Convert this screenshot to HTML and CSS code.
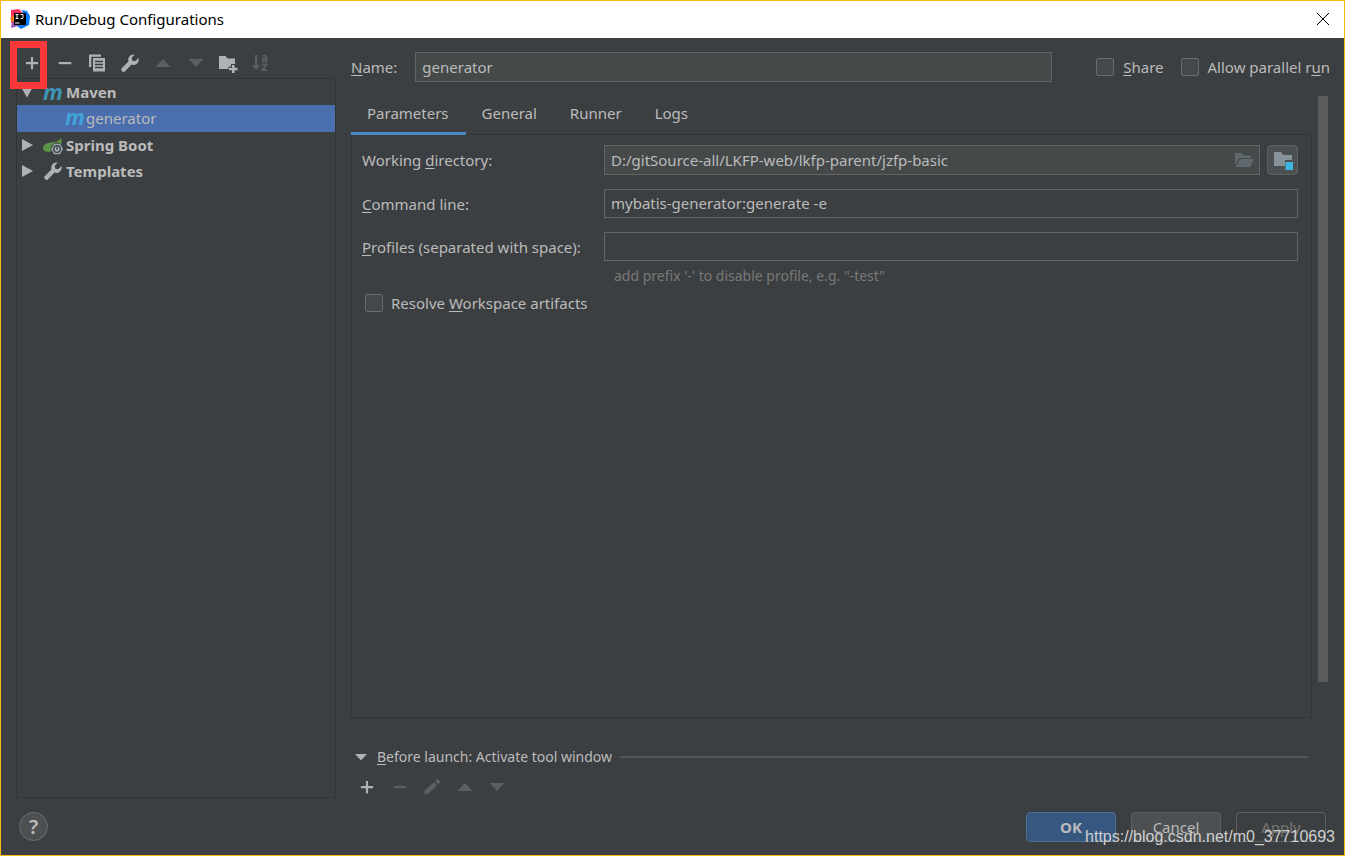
FILE: index.html
```html
<!DOCTYPE html>
<html lang="en">
<head>
<meta charset="utf-8">
<title>Run/Debug Configurations</title>
<link rel="stylesheet" href="styles.css">
</head>
<body>
<svg class="defs" aria-hidden="true">
  <symbol id="i-plus" viewBox="0 0 20 20"><path d="M8.9 4h2.2v5h5v2.2h-5v5H8.9v-5h-5V9h5z"/></symbol>
  <symbol id="i-minus" viewBox="0 0 20 20"><path d="M3.7 9h12.6v2.2H3.7z"/></symbol>
  <symbol id="i-copy" viewBox="0 0 20 20"><path d="M2 1.500h12v2.300H4.300V14H2z"/><path fill-rule="evenodd" d="M6 5h12v13.500H6zM8 7.800v1.500h8V7.800zm0 3v1.500h8v-1.500zm0 3v1.500h8v-1.500z"/></symbol>
  <symbol id="i-wrench" viewBox="0 0 20 20"><path d="M14.700 1.600a5.400 5.400 0 0 0-6.300 6.900L1.500 15.400a1.700 1.700 0 0 0 0 2.100l1 1a1.700 1.700 0 0 0 2.300 0l6.700-6.900a5.400 5.400 0 0 0 7-6.600L15.200 8.200 12.300 7.700 11.800 4.700z"/></symbol>
  <symbol id="i-up" viewBox="0 0 20 20"><path d="M10 6l7.500 8h-15z"/></symbol>
  <symbol id="i-down" viewBox="0 0 20 20"><path d="M2.500 6h15L10 14z"/></symbol>
  <symbol id="i-folder-add" viewBox="0 0 20 20"><path d="M1 3h6.500l2 2.500H17V11h-4v2.500h-2.500V16H1z"/><path d="M14 12h2.500v2.800h3v2.500h-3V20H14v-2.700h-3v-2.500h3z"/></symbol>
  <symbol id="i-pencil" viewBox="0 0 20 20"><path d="M11.700 5.200l3.300 3.300L6 17H2.500v-3.200zM12.800 4l1.800-1.800q.8-.6 1.500 0l2 2q.6.800 0 1.500L16.200 7.400z"/></symbol>
</svg>

<div class="dialog">
  <header class="titlebar">
    <svg class="app-logo" viewBox="0 0 20 20" aria-hidden="true">
      <path fill="#fe315d" d="M1 1l8-1 4 4-3 8-9 2z"/>
      <path fill="#f97a12" d="M0 9l4-3 4 7-4 3z"/>
      <path fill="#9b4fb5" d="M2 13l7-1-1 5-7 2z"/>
      <path fill="#087cfa" d="M12 1l5 1 3 5-1 9-8 4-4-3 8-6z"/>
      <path fill="#000" d="M4 4h12v12H4z"/>
      <path fill="none" stroke="#fff" d="M5.500 5.500h3M7 5.500v4M5.500 9.500h3M10.500 5.500h2.500v3q0 1-1 1h-1.500"/>
      <path fill="#fff" d="M5 13.500h4.500v1H5z"/>
    </svg>
    <h1 class="titlebar-text">Run/Debug Configurations</h1>
    <button class="close" type="button" aria-label="Close"><svg viewBox="0 0 14 14"><path d="M1 1l12 12M13 1L1 13"/></svg></button>
  </header>

  <main class="main">
    <aside class="sidebar">
      <div class="toolbar toolbar-side">
        <button class="tool tool-marked" type="button" aria-label="Add"><svg><use href="#i-plus"/></svg></button>
        <button class="tool" type="button" aria-label="Remove"><svg><use href="#i-minus"/></svg></button>
        <button class="tool" type="button" aria-label="Copy"><svg><use href="#i-copy"/></svg></button>
        <button class="tool" type="button" aria-label="Edit templates"><svg><use href="#i-wrench"/></svg></button>
        <button class="tool" type="button" aria-label="Move up" disabled><svg><use href="#i-up"/></svg></button>
        <button class="tool" type="button" aria-label="Move down" disabled><svg><use href="#i-down"/></svg></button>
        <button class="tool" type="button" aria-label="New folder"><svg><use href="#i-folder-add"/></svg></button>
        <button class="tool" type="button" aria-label="Sort" disabled><svg viewBox="0 0 20 20"><path d="M4 2h2.200v10h3.500L5.100 17 .5 12H4z"/><path fill="none" stroke="currentColor" stroke-width="1.800" d="M11.500 3.200q4-1.400 4 1.300v4.500M15.500 5.500h-2q-2 .2-2 1.500t1.500 1.400 2.500-1.400M11 11.500h4.500l-4 5.500H16"/></svg></button>
      </div>
      <div class="tree" role="tree">
        <div class="row" role="treeitem" aria-expanded="true">
          <svg class="arrow" viewBox="0 0 12 12"><path d="M0 1h12L6 11.500z"/></svg>
          <span class="maven" aria-hidden="true">m</span>
          <span class="group">Maven</span>
        </div>
        <div class="row row-child" role="treeitem" aria-selected="true">
          <span class="maven" aria-hidden="true">m</span>
          <span>generator</span>
        </div>
        <div class="row" role="treeitem" aria-expanded="false">
          <svg class="arrow" viewBox="0 0 12 12"><path d="M1 0l11 6L1 12z"/></svg>
          <svg class="node-icon" viewBox="0 0 20 20">
            <path fill="#5b9445" d="M18 3q1.500 6-.5 8L8 16.500Q0 18 0 13q.5-5 8-5.500 7-.5 10-4.500z"/>
            <circle cx="14" cy="14" r="6.500" fill="#3c3f41"/>
            <path fill="#9aa7b0" d="M11 8.800h6l3 5.200-3 5.200h-6L8 14z"/>
            <circle cx="14" cy="14" r="3.300" fill="none" stroke="#3c3f41" stroke-width="1.300"/>
            <path fill="none" stroke="#3c3f41" stroke-width="1.300" d="M14 11.500v3"/>
          </svg>
          <span class="group">Spring Boot</span>
        </div>
        <div class="row" role="treeitem" aria-expanded="false">
          <svg class="arrow" viewBox="0 0 12 12"><path d="M1 0l11 6L1 12z"/></svg>
          <svg class="node-icon"><use href="#i-wrench"/></svg>
          <span class="group">Templates</span>
        </div>
      </div>
    </aside>

    <section class="config">
      <div class="name-row">
        <label for="name"><u>N</u>ame:</label>
        <input class="field field-filled name-field" id="name" type="text" value="generator">
        <label class="check"><input type="checkbox"><span><u>S</u>hare</span></label>
        <label class="check"><input type="checkbox"><span>Allow parallel r<u>u</u>n</span></label>
      </div>

      <div class="scroll-area">
        <div class="scroll-content">
          <div class="tabs" role="tablist">
            <button class="tab" type="button" role="tab" aria-selected="true">Parameters</button>
            <button class="tab" type="button" role="tab">General</button>
            <button class="tab" type="button" role="tab">Runner</button>
            <button class="tab" type="button" role="tab">Logs</button>
          </div>
          <div class="panel" role="tabpanel">
            <div class="form">
              <label for="dir">Working <u>d</u>irectory:</label>
              <div class="dir-row">
                <div class="field field-filled dir-box">
                  <input class="dir-input" id="dir" type="text" value="D:/gitSource-all/LKFP-web/lkfp-parent/jzfp-basic">
                  <button class="browse" type="button" aria-label="Browse"><svg viewBox="0 0 20 16"><path d="M1 1h6.500l2 2.500H17V6H5.500L1 13z"/><path d="M6 7h14l-4 8H1.500z"/></svg></button>
                </div>
                <button class="module" type="button" aria-label="Select module"><svg viewBox="0 0 20 20"><path fill="#87939a" d="M1 2h7l2.500 3H19v5h-7v6H1z"/><path fill="#40b6e0" d="M12.500 12H20v8h-7.500z"/></svg></button>
              </div>
              <label for="cmd"><u>C</u>ommand line:</label>
              <input class="field" id="cmd" type="text" value="mybatis-generator:generate -e">
              <label for="profiles"><u>P</u>rofiles (separated with space):</label>
              <input class="field" id="profiles" type="text" aria-describedby="hint">
            </div>
            <p class="hint" id="hint">add prefix '-' to disable profile, e.g. "-test"</p>
            <label class="check resolve"><input type="checkbox"><span>Resolve <u>W</u>orkspace artifacts</span></label>
          </div>
          <div class="launch">
            <div class="launch-head">
              <svg class="arrow" viewBox="0 0 12 12"><path d="M0 3h12L6 9.500z"/></svg>
              <h2 class="launch-title"><u>B</u>efore launch: Activate tool window</h2>
              <span class="rule"></span>
            </div>
            <div class="toolbar toolbar-launch">
              <button class="tool" type="button" aria-label="Add task"><svg><use href="#i-plus"/></svg></button>
              <button class="tool" type="button" aria-label="Remove task" disabled><svg><use href="#i-minus"/></svg></button>
              <button class="tool" type="button" aria-label="Edit task" disabled><svg><use href="#i-pencil"/></svg></button>
              <button class="tool" type="button" aria-label="Move task up" disabled><svg><use href="#i-up"/></svg></button>
              <button class="tool" type="button" aria-label="Move task down" disabled><svg><use href="#i-down"/></svg></button>
            </div>
          </div>
        </div>
        <div class="scrollbar"><div class="thumb"></div></div>
      </div>
    </section>
  </main>

  <footer class="footer">
    <button class="help" type="button" aria-label="Help">?</button>
    <button class="btn btn-primary" type="button">OK</button>
    <button class="btn" type="button">Cancel</button>
    <button class="btn" type="button" disabled>Apply</button>
  </footer>
  <div class="watermark">https://blog.csdn.net/m0_37710693</div>
</div>
</body>
</html>
```

FILE: styles.css
```css
* { box-sizing: border-box; }

body {
  margin: 0;
  background: #3c3f41;
  color: #bbbbbb;
  font: 15px/20px "Noto Sans", "Open Sans", sans-serif;
}

button, input { font: inherit; color: inherit; margin: 0; }
button { padding: 0; border: 0; background: none; }
h1, h2, p { margin: 0; font-weight: 400; }
svg { display: block; fill: currentColor; }
u { text-underline-offset: 2px; text-decoration-thickness: 1px; text-decoration-skip-ink: none; }
.defs { position: absolute; width: 0; height: 0; }

.dialog {
  position: relative;
  display: flex;
  flex-direction: column;
  min-height: 100vh;
  border: 1px solid #fdb813;
}

/* Title bar */
.titlebar {
  display: flex;
  align-items: center;
  gap: 5px;
  height: 37px;
  padding: 0 14px 2px 9px;
  background: #fff;
  color: #000;
}
.app-logo { width: 20px; height: 20px; }
.titlebar-text { flex: 1; font-size: 15px; }
.close svg { width: 14px; height: 14px; fill: none; stroke: #000; stroke-width: 1; }

/* Main columns */
.main {
  flex: 1;
  display: grid;
  grid-template-columns: 320px 1fr;
  gap: 15px;
  padding: 0 14px 0 15px;
}
.sidebar, .config { display: flex; flex-direction: column; min-width: 0; }

/* Toolbars */
.toolbar { display: flex; align-items: center; justify-content: space-between; }
.toolbar-side { width: 255px; height: 40px; padding: 10px 0 0 6px; }
.toolbar-launch { width: 156px; padding-left: 6px; }
.tool { width: 20px; height: 20px; color: #afb1b3; }
.tool svg { width: 20px; height: 20px; }
.tool:disabled { color: #5c5e60; }
.tool-marked { position: relative; }
.tool-marked::after {
  content: "";
  position: absolute;
  inset: -12px -5px -16px -12px;
  border: 7px solid #fd3839;
}

/* Configuration tree */
.tree { flex: 1; border: 1px solid #323435; }
.row { display: flex; align-items: center; height: 26px; padding-left: 4px; }
.row-child { height: 27px; padding: 0 0 2px 48px; background: #4b6eaf; }
.arrow { width: 12px; height: 12px; color: #afb1b3; }
.row .arrow { margin-right: 10px; }
.maven {
  width: 21px;
  padding-bottom: 3px;
  color: #3d94b5;
  font-size: 22px;
  font-style: italic;
  font-weight: 700;
}
.row .maven { margin-right: 2px; line-height: 20px; }
.row-child .maven { margin-right: 0; color: #40a4d8; }
.node-icon { width: 20px; height: 20px; margin-right: 3px; color: #afb1b3; }
.group { font-weight: 700; }

/* Name row */
.name-row { display: flex; align-items: center; height: 58px; }
.name-field { flex: 1; margin: 0 44px 0 18px; }
.field {
  width: 100%;
  height: 29px;
  padding: 0 6px 1px;
  border: 1px solid #646464;
  border-radius: 0;
  background: none;
  outline: 0;
}
.field-filled { height: 30px; background: #45494a; }
.name-row .field { width: auto; }
.check { display: flex; align-items: center; gap: 8px; }
.name-row .check { gap: 9px; }
.check + .check { margin-left: 17px; }
.check input {
  appearance: none;
  width: 18px;
  height: 18px;
  border: 1px solid #6b6b6b;
  border-radius: 2px;
  background: #43494a;
}

/* Scrolling area */
.scroll-area { flex: 1; display: flex; gap: 6px; }
.scroll-content { flex: 1; display: flex; flex-direction: column; min-width: 0; }
.scrollbar { width: 12px; }
.thumb { width: 10px; height: 83.5%; background: #595b5d; }

/* Tabs */
.tabs { display: flex; height: 39px; border-bottom: 1px solid #323435; }
.tab { height: 39px; padding: 0 17px 3px 16px; border-bottom: 3px solid transparent; }
.tab[aria-selected="true"] { border-color: #4a88c7; }

.panel {
  flex: 1;
  padding: 10px 13px 0 10px;
  border: 1px solid #323435;
  border-top: 0;
}
.form {
  display: grid;
  grid-template-columns: 242px 1fr;
  align-items: center;
  row-gap: 14px;
}
.dir-row { display: flex; gap: 7px; }
.dir-box { flex: 1; display: flex; align-items: center; padding-right: 5px; }
.dir-input { flex: 1; padding: 0; border: 0; background: none; outline: 0; }
.browse svg { width: 20px; height: 16px; color: #5f686c; }
.module {
  display: grid;
  place-items: center;
  width: 31px;
  height: 30px;
  border: 1px solid #5e6060;
  border-radius: 4px;
  background: #4c5052;
}
.module svg { width: 20px; height: 20px; }
.hint { margin: 5px 0 0 252px; color: #787878; font-size: 14px; }
.resolve { width: fit-content; margin: 7px 0 0 3px; }

/* Before launch */
.launch { padding-top: 29px; height: 80px; }
.launch-head { display: flex; align-items: center; padding: 0 4px; }
.launch-title { margin: 0 8px 0 10px; font-size: 14px; line-height: 20px; }
.rule { flex: 1; height: 2px; background: #555555; }
.toolbar-launch { padding-top: 10px; }

/* Footer */
.footer {
  display: flex;
  align-items: center;
  gap: 15px;
  height: 57px;
  padding: 0 18px;
}
.help {
  width: 29px;
  height: 29px;
  margin-right: auto;
  border: 1px solid #6a6d6f;
  border-radius: 50%;
  background: #4c5052;
  font-size: 20px;
  font-weight: 600;
}
.btn {
  width: 90px;
  height: 30px;
  border: 1px solid #5e6060;
  border-radius: 4px;
  background: #4c5052;
}
.btn-primary { border-color: #4c708c; background: #365880; font-weight: 700; }
.btn:disabled { background: none; color: #777777; }

.watermark {
  position: absolute;
  right: 9px;
  bottom: 8px;
  color: #d0d0d0;
  font: 16px/20px "Liberation Sans", Arial, sans-serif;
}
```
